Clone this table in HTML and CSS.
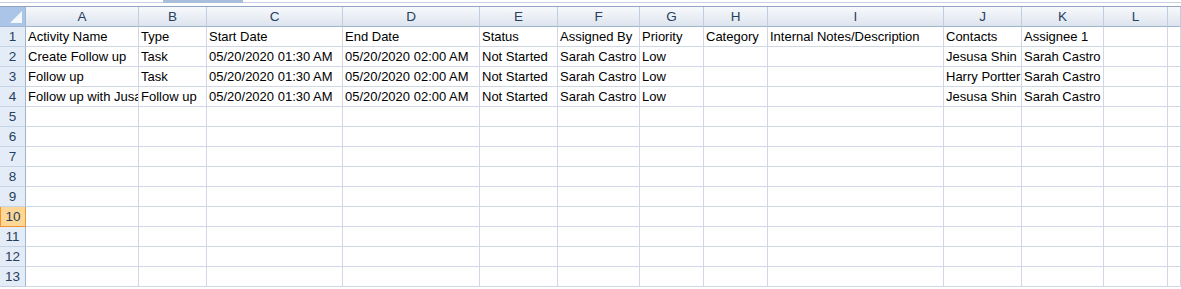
FILE: index.html
```html
<!DOCTYPE html>
<html lang="en">
<head>
  <meta charset="UTF-8">
  <title>Activities export</title>
  <link rel="stylesheet" href="styles.css">
</head>
<body>
  <!-- Edge of the ribbon above the sheet -->
  <div class="sheet-top">
    <div class="tab-stub"></div>
  </div>

  <div class="sheet" id="sheet"></div>

  <script>
    const columns = ["A", "B", "C", "D", "E", "F", "G", "H", "I", "J", "K", "L", ""];

    const rows = [
      ["Activity Name", "Type", "Start Date", "End Date", "Status", "Assigned By", "Priority", "Category", "Internal Notes/Description", "Contacts", "Assignee 1"],
      ["Create Follow up", "Task", "05/20/2020 01:30 AM", "05/20/2020 02:00 AM", "Not Started", "Sarah Castro", "Low", "", "", "Jesusa Shin", "Sarah Castro"],
      ["Follow up", "Task", "05/20/2020 01:30 AM", "05/20/2020 02:00 AM", "Not Started", "Sarah Castro", "Low", "", "", "Harry Portter", "Sarah Castro"],
      ["Follow up with Jusa Shin", "Follow up", "05/20/2020 01:30 AM", "05/20/2020 02:00 AM", "Not Started", "Sarah Castro", "Low", "", "", "Jesusa Shin", "Sarah Castro"]
    ];

    const totalRows = 13;
    const activeRow = 10;
    const sheet = document.getElementById("sheet");

    function addCell(className, text) {
      const cell = document.createElement("div");
      cell.className = className;
      cell.textContent = text;
      sheet.appendChild(cell);
    }

    // Column letters
    addCell("corner", "");
    columns.forEach(letter => addCell("col-head", letter));

    // Numbered rows
    for (let r = 1; r <= totalRows; r++) {
      addCell(r === activeRow ? "row-head active" : "row-head", r);
      const data = rows[r - 1] || [];
      columns.forEach((_, c) => addCell("cell", data[c] || ""));
    }
  </script>
</body>
</html>
```

FILE: styles.css
```css
body {
  margin: 0;
  background: #fff;
  font-family: 'Liberation Sans', Arial, sans-serif;
  font-size: 13px;
  color: #000;
  overflow: hidden;
}

/* Thin strip left of the ribbon */
.sheet-top {
  height: 6px;
  border-bottom: 1px solid #8ea4c1;
  background: linear-gradient(to bottom, #fff 2px, #c3d0e0 2px, #c3d0e0 3px, #fff 3px);
  display: flex;
}

.tab-stub {
  margin-left: 163px;
  width: 80px;
  height: 3px;
  background: #a9bedb;
}

/* Worksheet grid */
.sheet {
  display: grid;
  grid-template-columns: 26px 113px 68px 136px 137px 78px 82px 64px 64px 176px 78px 82px 64px 1fr;
  grid-auto-rows: 20px;
}

.sheet > div {
  box-sizing: border-box;
  line-height: 20px;
  white-space: nowrap;
  overflow: hidden;
}

.corner {
  background: #abc5e8;
  border-right: 1px solid #9eb6ce;
  border-bottom: 1px solid #9eb6ce;
  position: relative;
}

/* little white triangle in the select-all box */
.corner::after {
  content: "";
  position: absolute;
  right: 3px;
  bottom: 3px;
  width: 0;
  height: 0;
  border-left: 12px solid transparent;
  border-bottom: 12px solid #f4f7fb;
}

.col-head {
  background: linear-gradient(to bottom, #f7f9fc, #dde4ee);
  border-right: 1px solid #c0cfe0;
  border-bottom: 1px solid #9eb6ce;
  text-align: center;
  color: #27405e;
  font-size: 13.5px;
}

.row-head {
  background: #e4ecf7;
  border-right: 1px solid #9eb6ce;
  border-bottom: 1px solid #c5d3e4;
  text-align: center;
  color: #27405e;
  font-size: 13.5px;
}

.row-head.active {
  background: #fcd796;
  border: 1px solid #f29436;
  border-top: none;
}

.cell {
  border-right: 1px solid #d0d7e5;
  border-bottom: 1px solid #d0d7e5;
  padding-left: 2px;
}
```
